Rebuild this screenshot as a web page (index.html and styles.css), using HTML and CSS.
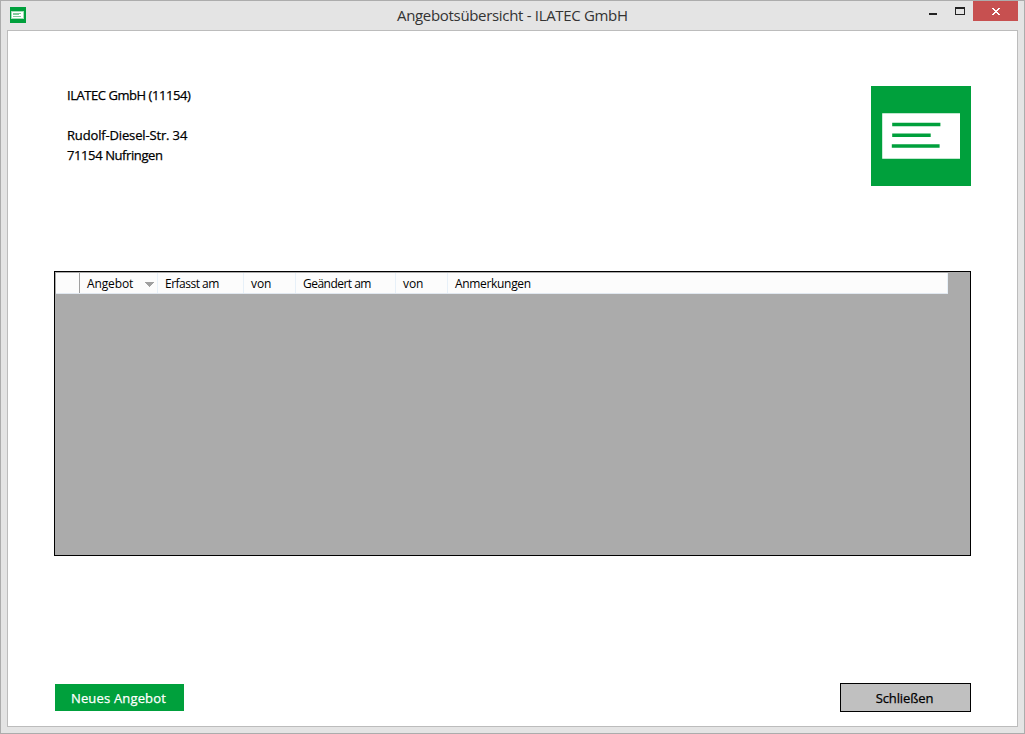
FILE: index.html
```html
<!DOCTYPE html>
<html lang="de">
<head>
<meta charset="utf-8">
<title>Angebotsübersicht - ILATEC GmbH</title>
<link rel="stylesheet" href="styles.css">
</head>
<body>
<div class="window">
  <header class="titlebar">
    <svg class="app-icon" viewBox="0 0 16 16" shape-rendering="crispEdges">
      <path fill="#00a03c" d="M0 0h16v16H0z"/>
      <path fill="#a6dcb9" d="M1 4h13v8H1z"/>
      <path fill="#fff" d="M2 5h11v6H2z"/>
      <path fill="#80cb9b" d="M3 6h8v1H3zM3 7h6v1H3zM3 9h8v1H3z"/>
    </svg>
    <h1 class="title">Angebotsübersicht - ILATEC GmbH</h1>
    <div class="controls">
      <svg class="glyphs" viewBox="0 0 54 20" shape-rendering="crispEdges">
        <path fill="#222" d="M10 12h8v2h-8z"/>
        <path fill="#222" fill-rule="evenodd" d="M36 6h10v8H36zM37 8v5h8V8z"/>
      </svg>
      <div class="close">
        <svg viewBox="0 0 8 7" width="8" height="7" shape-rendering="crispEdges"><path fill="#fff" d="M0 0h2v1H0zM6 0h2v1H6zM1 1h2v1H1zM5 1h2v1H5zM2 2h4v1H2zM3 3h2v1H3zM2 4h4v1H2zM1 5h2v1H1zM5 5h2v1H5zM0 6h2v1H0zM6 6h2v1H6z"/></svg>
      </div>
    </div>
  </header>
  <main class="client">
    <section class="customer">
      <address class="address">
        <div class="t-name">ILATEC GmbH (11154)</div>
        <div class="gap"></div>
        <div class="t-street">Rudolf-Diesel-Str. 34</div>
        <div class="t-city">71154 Nufringen</div>
      </address>
      <svg class="logo" viewBox="0 0 100 100">
        <path fill="#00a03c" d="M0 0h100v100H0z"/>
        <path fill="#fff" d="M11.2 27.2H89v45.5H11.2z"/>
        <path fill="#00a03c" d="M21.2 36.7h48.2v3.6H21.2zM21.2 47.5h38.5v3.6H21.2zM20.8 58.2h47.8v3.6H20.8z"/>
      </svg>
    </section>
    <section class="grid">
      <div class="grid-head">
        <div class="cell corner"></div>
        <div class="cell offer"><span>Angebot</span>
          <svg class="sort" viewBox="0 0 9 5" shape-rendering="crispEdges"><path fill="#a0a0a0" d="M0 0h9v1H0zM1 1h7v1H1zM2 2h5v1H2zM3 3h3v1H3zM4 4h1v1H4z"/></svg>
        </div>
        <div class="cell created">Erfasst am</div>
        <div class="cell by">von</div>
        <div class="cell changed">Geändert am</div>
        <div class="cell by">von</div>
        <div class="cell notes">Anmerkungen</div>
      </div>
    </section>
    <footer class="actions">
      <button class="btn primary">Neues Angebot</button>
      <button class="btn secondary">Schließen</button>
    </footer>
  </main>
</div>
</body>
</html>
```
FILE: styles.css
```css
* { box-sizing: border-box; }
body { margin: 0; font-family: "Open Sans", "Noto Sans", sans-serif; color: #000; overflow: hidden; }
svg { display: block; }

.window {
  width: 1025px;
  height: 734px;
  border: 1px solid #acacac;
  background: #e4e4e4;
  padding: 0 6px 6px;
}
.titlebar { height: 29px; display: flex; }
.app-icon { width: 16px; height: 16px; margin: 6px 0 0 3px; flex: none; }
.title { margin: 0 auto 0 371px; font-size: 15px; font-weight: 400; line-height: 29px; letter-spacing: -0.32px; color: #333; white-space: nowrap; }
.controls { display: flex; flex: none; }
.glyphs { width: 54px; height: 20px; flex: none; }
.close { width: 45px; height: 20px; background: #c75050; display: flex; align-items: center; justify-content: center; padding-top: 1px; }

.client { width: 1011px; height: 697px; border: 1px solid #bcbcbc; background: #fff; padding: 55px 46px 14px; display: flex; flex-direction: column; }
.customer { display: flex; justify-content: space-between; height: 185px; padding-left: 13px; }
.address { font-style: normal; font-size: 13px; line-height: 20px; margin-top: -1px; -webkit-text-stroke: 0.25px #000; white-space: nowrap; }
.gap { height: 20px; }
.t-name { letter-spacing: -0.45px; }
.t-street { letter-spacing: -0.15px; }
.t-city { letter-spacing: -0.4px; }
.logo { width: 100px; height: 100px; }

.grid { height: 285px; border: 1px solid #000; background: #ababab; padding: 1px; }
.grid-head { display: flex; width: 892px; height: 21px; background: #fcfcfc; border-bottom: 1px solid #e1e8f0; font-size: 12px; line-height: 22px; white-space: nowrap; }
.cell { border-right: 1px solid #e7f0f8; padding-left: 7px; flex: none; }
.corner { width: 24px; border-right-color: #a0a0a0; }
.offer { width: 78px; display: flex; justify-content: space-between; align-items: flex-start; padding-right: 3px; letter-spacing: -0.12px; }
.sort { width: 9px; height: 5px; margin-top: 9px; }
.created { width: 86px; letter-spacing: -0.5px; }
.by { width: 52px; letter-spacing: -0.1px; }
.changed { width: 100px; letter-spacing: -0.52px; }
.notes { width: 500px; letter-spacing: -0.32px; }

.actions { display: flex; justify-content: space-between; align-items: center; margin-top: 127px; height: 29px; padding-left: 1px; }
.btn { font: 400 13px/20px "Open Sans", "Noto Sans", sans-serif; padding: 1px 2px 0 0; border: 0; -webkit-text-stroke: 0.25px currentColor; }
.primary { width: 129px; height: 27px; background: #00a03c; color: #fff; letter-spacing: 0.17px; }
.secondary { width: 131px; height: 29px; background: #c0c0c0; color: #000; border: 1px solid #000; letter-spacing: -0.1px; }
```
